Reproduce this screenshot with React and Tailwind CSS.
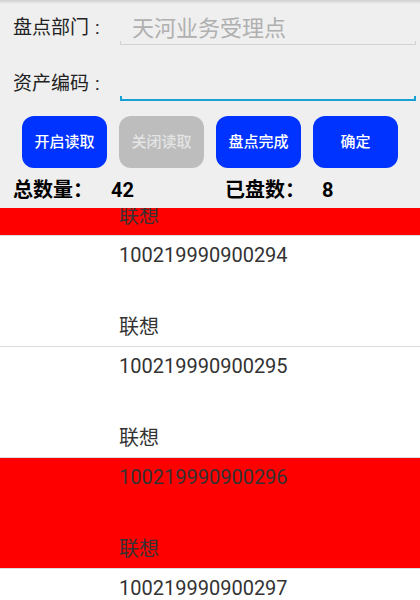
import React from 'react';

const items = [
  { code: '100219990900293', name: '联想', checked: true },
  { code: '100219990900294', name: '联想', checked: false },
  { code: '100219990900295', name: '联想', checked: false },
  { code: '100219990900296', name: '联想', checked: true },
  { code: '100219990900297', name: '联想', checked: false },
  { code: '100219990900298', name: '联想', checked: false },
];

const FieldRow = ({ label, placeholder, focused }) => (
  <div className="flex h-[56px] items-center">
    <span className="w-[120px] shrink-0 pl-[13px] text-[19px] text-[#222]">
      {label}
      <span className="ml-[6px]">:</span>
    </span>
    <div className="relative mr-[4px] flex h-[34px] flex-1 items-center pl-[12px]">
      <span className="text-[22px] text-[#b0b0b0]">{placeholder}</span>
      {focused ? (
        <div className="absolute bottom-0 left-0 right-0 h-[5px] border-x-2 border-b-2 border-[#1aa1d4]" />
      ) : (
        <div className="absolute bottom-0 left-0 right-0 h-[4px] border-x border-b border-[#d2d2d2]" />
      )}
    </div>
  </div>
);

const Btn = ({ children, disabled }) => (
  <button
    className={
      disabled
        ? 'h-[52px] w-[85px] rounded-[12px] bg-[#bdbdbd] text-[15px] font-medium text-[#e4e4e4]'
        : 'h-[52px] w-[85px] rounded-[12px] bg-[#0033ff] text-[15px] font-medium text-white'
    }
  >
    {children}
  </button>
);

export default function App() {
  return (
    <div className="relative flex h-[600px] flex-col overflow-hidden bg-[#efefef] font-[Roboto,'Noto_Sans_CJK_SC',sans-serif]">
      <div className="absolute left-0 right-0 top-0 h-[4px] bg-gradient-to-b from-[#d0d0d0] to-transparent" />

      <FieldRow label="盘点部门" placeholder="天河业务受理点" />
      <FieldRow label="资产编码" placeholder="" focused />

      <div className="flex gap-[12px] px-[22px] pt-[4px]">
        <Btn>开启读取</Btn>
        <Btn disabled>关闭读取</Btn>
        <Btn>盘点完成</Btn>
        <Btn>确定</Btn>
      </div>

      <div className="flex h-[40px] items-center pl-[13px] pt-[4px] text-[20px] font-bold text-black">
        <span className="w-[98px]">总数量：</span>
        <span className="w-[114px]">42</span>
        <span className="w-[97px]">已盘数：</span>
        <span>8</span>
      </div>

      <div className="flex-1 overflow-hidden bg-white">
        <div className="-mt-[83px]">
          {items.map((it) => (
            <div
              key={it.code}
              className={
                it.checked
                  ? 'flex h-[111px] flex-col justify-between border-b border-[#dcdcdc] bg-[#ff0000] pb-[7px] pl-[119px] pt-[7px] text-[20px] leading-[24px] text-[#333]'
                  : 'flex h-[111px] flex-col justify-between border-b border-[#dcdcdc] bg-white pb-[7px] pl-[119px] pt-[7px] text-[20px] leading-[24px] text-[#333]'
              }
            >
              <span>{it.code}</span>
              <span>{it.name}</span>
            </div>
          ))}
        </div>
      </div>
    </div>
  );
}
